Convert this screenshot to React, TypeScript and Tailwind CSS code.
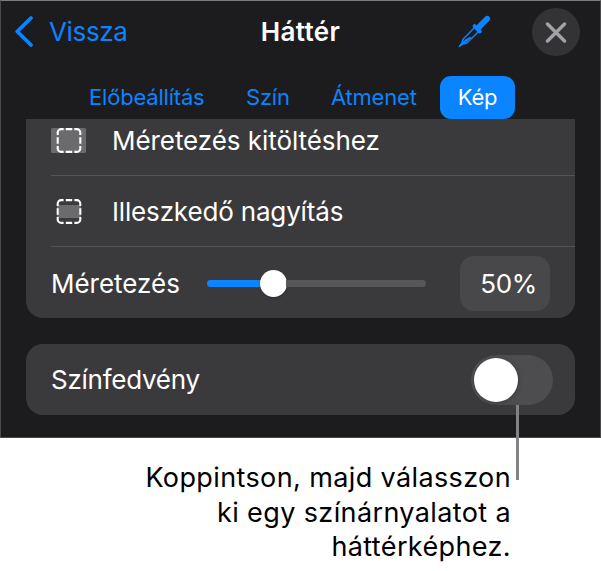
import type { ReactNode } from "react";

const tabs = [
  { label: "Előbeállítás", className: "w-[116px] tracking-[-0.2px]" },
  { label: "Szín", className: "w-[44px] tracking-[-0.2px]" },
  { label: "Átmenet", className: "w-[87px] tracking-[-0.2px]" },
];

function BackIcon() {
  return (
    <svg
      width="20"
      height="34"
      viewBox="0 0 20 34"
      fill="none"
      stroke="currentColor"
      strokeWidth="3.8"
      strokeLinecap="round"
      strokeLinejoin="round"
    >
      <path d="M17 3 L3.2 16.5 L17 30" />
    </svg>
  );
}

function EyedropperIcon() {
  return (
    <svg width="34" height="34" viewBox="0 0 34 34" fill="none">
      <path
        d="M16.6 12.4 L5 24.2 L3.9 27.8 L1.3 31.3 L5.2 29 L8.9 28 L20.6 16.4"
        stroke="currentColor"
        strokeWidth="1.4"
        strokeLinejoin="round"
      />
      <path
        d="M1.3 31.3 L4 27.4 L7.4 24.4 L11.6 22 L13.6 22 L9 26.8 L5.2 29 Z"
        fill="currentColor"
      />
      <path
        d="M16.6 11.2 L21.8 16.4"
        stroke="currentColor"
        strokeWidth="4"
        strokeLinecap="round"
      />
      <path
        d="M20.4 12.6 L29.2 3.8"
        stroke="currentColor"
        strokeWidth="5.8"
        strokeLinecap="round"
      />
    </svg>
  );
}

function DashedFrame() {
  return (
    <g fill="none" stroke="white" strokeWidth="2.1">
      <path d="M6.7 7 V4.6 A3.5 3.5 0 0 1 10.2 1.1 H12.6" />
      <path d="M23.4 1.1 H25.8 A3.5 3.5 0 0 1 29.3 4.6 V7" />
      <path d="M29.3 18 V20.4 A3.5 3.5 0 0 1 25.8 23.9 H23.4" />
      <path d="M12.6 23.9 H10.2 A3.5 3.5 0 0 1 6.7 20.4 V18" />
      <path d="M14.8 1.1 H21.2 M14.8 23.9 H21.2 M6.7 9.3 V15.7 M29.3 9.3 V15.7" />
    </g>
  );
}

function FillIcon() {
  return (
    <svg width="35" height="25" viewBox="0 0 35 25">
      <rect width="35" height="25" rx="1.5" fill="#6b6b6d" />
      <DashedFrame />
    </svg>
  );
}

function FitIcon() {
  return (
    <svg width="35" height="25" viewBox="0 0 35 25">
      <rect x="6" y="6" width="24" height="13" fill="#6b6b6d" />
      <DashedFrame />
    </svg>
  );
}

function Option({
  icon,
  className,
  children,
}: {
  icon: ReactNode;
  className: string;
  children: ReactNode;
}) {
  return (
    <div
      className={`ml-[25px] flex items-center gap-[26px] border-b border-[#545456] ${className}`}
    >
      {icon}
      <span>{children}</span>
    </div>
  );
}

export default function App() {
  return (
    <div className="h-[571px] w-[601px] overflow-hidden bg-white font-['Inter','Liberation_Sans',sans-serif]">
      <div className="h-[438px] border border-t-[#7c7c7e] border-r-[#4a4a4c] border-b-[#4a4a4c] border-l-[#4a4a4c] bg-[#1c1c1e]">
        <header className="grid h-[62px] grid-cols-[1fr_auto_1fr] items-center text-[26px]">
          <button className="flex items-center gap-[15px] pl-[13px] text-[#0a84ff]">
            <BackIcon />
            <span className="pb-[2px] tracking-[-0.35px]">Vissza</span>
          </button>
          <h1 className="pb-[2px] font-semibold tracking-[0.4px] text-white">Háttér</h1>
          <div className="flex items-center justify-end gap-[40px] pr-[20px]">
            <span className="text-[#0a84ff]">
              <EyedropperIcon />
            </span>
            <button className="flex size-12 items-center justify-center rounded-full bg-[#333336]">
              <svg
                width="22"
                height="22"
                viewBox="0 0 22 22"
                stroke="#a1a1a8"
                strokeWidth="3.4"
                strokeLinecap="round"
              >
                <path d="M2.5 3 L19.5 20 M19.5 3 L2.5 20" />
              </svg>
            </button>
          </div>
        </header>

        <nav className="mt-[12px] flex h-[44px] items-center pl-[88px] text-[22px] whitespace-nowrap text-[#0a84ff]">
          <div className="flex gap-[41px] pt-px">
            {tabs.map((tab) => (
              <button key={tab.label} className={`text-left ${tab.className}`}>
                {tab.label}
              </button>
            ))}
          </div>
          <button className="ml-[22px] h-[43px] w-[75px] rounded-[11px] bg-[#0a84ff] pt-px tracking-[-0.2px] text-white">
            Kép
          </button>
        </nav>

        <main className="px-[25px] text-[26px] text-white">
          <section className="rounded-b-[17px] bg-[#3a3a3c]">
            <Option icon={<FillIcon />} className="h-[57px] pb-[13px] tracking-[-0.06px]">
              Méretezés kitöltéshez
            </Option>
            <Option icon={<FitIcon />} className="h-[71px] tracking-[-0.16px]">
              Illeszkedő nagyítás
            </Option>
            <div className="flex h-[71px] items-center pt-px pl-[25px]">
              <span className="w-[156px] tracking-[-0.02px]">Méretezés</span>
              <div className="flex w-[219px] items-center">
                <div className="h-[7px] w-[56px] rounded-l-full bg-[#0a84ff]" />
                <div className="-ml-[3px] size-[27px] shrink-0 rounded-full bg-white shadow-[0_1px_2px_rgba(0,0,0,0.3)]" />
                <div className="-ml-[1px] h-[7px] flex-1 rounded-r-full bg-[#57575a]" />
              </div>
              <div className="ml-[34px] flex h-[55px] w-[90px] items-center justify-end rounded-[14px] bg-[#48484b] pr-[13px] tracking-[-0.3px]">
                50%
              </div>
            </div>
          </section>

          <section className="mt-[26px] flex h-[71px] items-center justify-between rounded-[17px] bg-[#3a3a3c] pr-[22px] pl-[25px]">
            <span className="tracking-[-0.25px]">Színfedvény</span>
            <div className="h-[50px] w-[82px] rounded-full bg-[#4d4d50] p-[3px]">
              <div className="size-[44px] rounded-full bg-white shadow-[1px_1px_4px_rgba(0,0,0,0.2)]" />
            </div>
          </section>
        </main>
      </div>

      <div className="relative mt-[23px] w-[511px] text-right text-[27px] leading-[34.6px] tracking-[0.38px] text-black">
        {/* leader line from the toggle down to the caption */}
        <div className="absolute -top-[56px] left-[516px] h-[75px] w-[3px] bg-[#828285]" />
        <p>
          Koppintson, majd válasszon
          <br />
          ki egy színárnyalatot a<br />
          háttérképhez.
        </p>
      </div>
    </div>
  );
}
